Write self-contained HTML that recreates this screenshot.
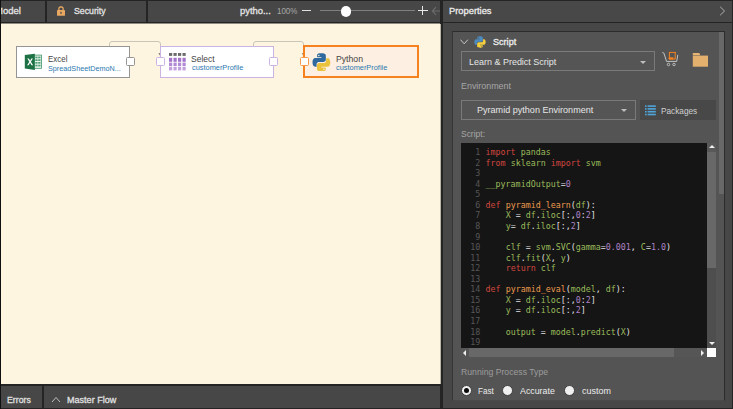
<!DOCTYPE html>
<html><head><meta charset="utf-8"><title>Properties</title>
<style>
*{box-sizing:border-box;margin:0;padding:0}
html,body{width:733px;height:409px;overflow:hidden;background:#242424;font-family:"Liberation Sans",sans-serif;}
.abs,.abs *{position:absolute}
#root{position:relative;width:733px;height:409px;overflow:hidden;background:#242424}
.bar{background:#474747}
.t{white-space:nowrap;line-height:1;transform-origin:0 50%;transform:scaleX(var(--s,1))}
.sb{-webkit-text-stroke:0.3px currentColor}
.cream{background:#fdf5e0}
.node{background:#fff;border:1px solid #959595}
.port{width:9px;height:9px;background:#fff;border:1px solid #959595;border-radius:1.5px}
.nt{font-size:9.6px;color:#444}
.ns{font-size:7.6px;color:#2a7ab0}
.code{font-family:"DejaVu Sans Mono","Liberation Mono",monospace;font-size:8.32px;line-height:10.57px;white-space:pre;color:#e6e6e6}
.k{color:#d2463f}.g{color:#9bbb5b}.f{color:#ec9a4e}.n{color:#ad83c6}.w{color:#e2e2e2}
.ln{color:#575757;text-align:right}
.abs .code span{position:static}
</style></head><body>
<div id="root" class="abs">

<!-- top toolbar (left) -->
<div class="bar" style="left:1px;top:1px;width:439px;height:21px"></div>
<div style="left:45px;top:1px;width:2px;height:21px;background:#242424"></div>
<div style="left:146px;top:1px;width:2px;height:21px;background:#242424"></div>
<div class="t sb" style="left:-5.2px;top:7.4px;font-size:9.3px;color:#e4e4e4;--s:1.020">Model</div>
<svg style="left:56px;top:6px" width="10" height="10" viewBox="0 0 10 10"><path d="M2.900 4.200V2.500a1.500 1.500 0 0 1 1.500-1.500h1.200a1.500 1.500 0 0 1 1.500 1.500V4.200" fill="none" stroke="#e8a862" stroke-width="1.300"/><rect x="1" y="4" width="8" height="5.8" rx="0.6" fill="#e8a862"/><rect x="4.4" y="5.8" width="1.2" height="2" fill="#444"/></svg>
<div class="t sb" style="left:74.4px;top:7.4px;font-size:9.3px;color:#e4e4e4;--s:0.941">Security</div>
<div class="t sb" style="left:240.2px;top:7.4px;font-size:9.3px;color:#e4e4e4;--s:1.010">pytho...</div>
<div class="t" style="left:276.7px;top:7.4px;font-size:9.3px;color:#a8a8a8;--s:0.858">100%</div>
<div style="left:302px;top:10px;width:9px;height:1.4px;background:#e0e0e0"></div>
<div style="left:320px;top:10.4px;width:95px;height:1px;background:#808080"></div>
<div style="left:340.5px;top:6px;width:10.5px;height:10.5px;border-radius:50%;background:#fff"></div>
<div style="left:418px;top:10.100px;width:9.600px;height:1.300px;background:#e8e8e8"></div>
<div style="left:422.200px;top:5.900px;width:1.300px;height:9.600px;background:#e8e8e8"></div>
<svg style="left:431px;top:6px" width="10" height="10" viewBox="0 0 10 10"><path d="M9 5H1.5M5 1.2L1.3 5L5 8.8" fill="none" stroke="#6c6c6c" stroke-width="1.1"/></svg>

<!-- canvas -->
<div class="cream" style="left:1px;top:24px;width:439px;height:360px"></div>

<div style="left:440px;top:24px;width:1px;height:360px;background:#bdb7a9"></div>
<div style="left:1px;top:23px;width:439px;height:1px;background:#8f8b81"></div>
<div style="left:0;top:0;width:1px;height:409px;background:#101010"></div>
<!-- connectors -->
<svg style="left:0;top:24px" width="440" height="360" viewBox="0 24 440 360">
<path d="M109.5 46V44a2.5 2.5 0 0 1 2.500-2.500H158a2.500 2.500 0 0 1 2.500 2.500V57" fill="none" stroke="#c9c5b8" stroke-width="1"/>
<path d="M253.500 46V44a2.500 2.500 0 0 1 2.500-2.500H301a2.500 2.500 0 0 1 2.500 2.500V57" fill="none" stroke="#c9c5b8" stroke-width="1"/>
<path d="M158.500 53.200H160L159.600 55.600Z" fill="#5a5a5a"/><path d="M302 53.200H303.500L303.100 55.600Z" fill="#5a5a5a"/>
</svg>

<!-- Excel node -->
<div class="node" style="left:16px;top:46px;width:114px;height:32px"></div>
<svg style="left:24px;top:53px" width="19" height="18" viewBox="0 0 19 18">
<rect x="10" y="2.100" width="7.400" height="13.200" fill="#eaf4ee" stroke="#3c9464" stroke-width="0.800"/>
<g fill="#4f9f74"><rect x="11.300" y="3.600" width="2.300" height="1.700"/><rect x="14.200" y="3.600" width="2.300" height="1.700"/><rect x="11.300" y="6.300" width="2.300" height="1.700"/><rect x="14.200" y="6.300" width="2.300" height="1.700"/><rect x="11.300" y="9" width="2.300" height="1.700"/><rect x="14.200" y="9" width="2.300" height="1.700"/><rect x="11.300" y="11.700" width="2.300" height="1.700"/><rect x="14.200" y="11.700" width="2.300" height="1.700"/></g>
<path d="M0.800 2L10.800 0.800V16.900L0.800 15.400Z" fill="#1e7145"/>
<path d="M3.300 5.600L5.300 8.800L3.100 12.200H4.700L6.100 9.800L7.500 12.200H9.100L6.900 8.800L8.900 5.600H7.300L6.100 7.800L4.900 5.600Z" fill="#fff"/>
</svg>
<div class="t" style="left:47.6px;top:55.0px;font-size:9.3px;color:#444;--s:0.853">Excel</div>
<div class="t" style="left:47.6px;top:64.6px;font-size:7.4px;color:#2a78b0;--s:0.979">SpreadSheetDemoN...</div>
<div class="port" style="left:126px;top:57px"></div>

<!-- Select node -->
<div class="node" style="left:160px;top:46px;width:114px;height:32px;border-color:#cdb2e4"></div>
<svg style="left:169px;top:53.400px" width="18" height="18" viewBox="0 0 18 18"><rect x="0" y="0" width="3.200" height="2.9" fill="#6b6b6b"/><rect x="4.5" y="0" width="3.200" height="2.9" fill="#6b6b6b"/><rect x="9" y="0" width="3.200" height="2.9" fill="#6b6b6b"/><rect x="13.5" y="0" width="3.200" height="2.9" fill="#6b6b6b"/><rect x="0" y="4.8" width="3.200" height="4.0" fill="#a173c9"/><rect x="4.5" y="4.8" width="3.200" height="4.0" fill="#a173c9"/><rect x="9" y="4.8" width="3.200" height="4.0" fill="#a173c9"/><rect x="13.5" y="4.8" width="3.200" height="4.0" fill="#a173c9"/><rect x="0" y="9.6" width="3.200" height="3.6" fill="#b289d5"/><rect x="4.5" y="9.6" width="3.200" height="3.6" fill="#b289d5"/><rect x="9" y="9.6" width="3.200" height="3.6" fill="#b289d5"/><rect x="13.5" y="9.6" width="3.200" height="3.6" fill="#b289d5"/><rect x="0" y="14" width="3.200" height="3.4" fill="#c2a0de"/><rect x="4.5" y="14" width="3.200" height="3.4" fill="#c2a0de"/><rect x="9" y="14" width="3.200" height="3.4" fill="#c2a0de"/><rect x="13.5" y="14" width="3.200" height="3.4" fill="#c2a0de"/></svg>
<div class="t" style="left:191.1px;top:55.0px;font-size:9.3px;color:#444;--s:0.913">Select</div>
<div class="t" style="left:191.7px;top:64.4px;font-size:7.4px;color:#2a78b0;--s:0.999">customerProfile</div>
<div class="port" style="left:155.800px;top:57px;border-color:#cdb2e4"></div>
<div class="port" style="left:269.300px;top:57px;border-color:#cdb2e4"></div>

<!-- Python node -->
<div style="left:302.500px;top:45px;width:116.500px;height:33px;background:#fdf0e2;border:2px solid #f5821f"></div>
<svg style="left:312px;top:52.500px" width="18.800" height="18.800" viewBox="0 0 110 110">
<path d="M54 2C28 2 30 13 30 13v12h25v4H20S3 27 3 54s15 26 15 26h9V67s-1-15 15-15h25s14 0 14-14V15S83 2 54 2zM40 10a4.500 4.500 0 1 1 0 9 4.500 4.500 0 0 1 0-9z" fill="#30699d"/>
<path d="M56 108c26 0 24-11 24-11V85H55v-4h35s17 2 17-25-15-26-15-26h-9v13s1 15-15 15H43s-14 0-14 14v23s-2 13 27 13zm14-8a4.500 4.500 0 1 1 0-9 4.500 4.500 0 0 1 0 9z" fill="#eac23c"/>
</svg>
<div class="t" style="left:335.8px;top:55.0px;font-size:9.3px;color:#444;--s:0.933">Python</div>
<div class="t" style="left:336.1px;top:64.4px;font-size:7.4px;color:#2a78b0;--s:0.999">customerProfile</div>
<div class="port" style="left:299.500px;top:57px;border-color:#f6994a"></div>

<!-- bottom bar -->
<div class="bar" style="left:1px;top:386px;width:439px;height:22px"></div>
<div style="left:42px;top:386px;width:2px;height:22px;background:#242424"></div>
<div class="t sb" style="left:6.7px;top:396.0px;font-size:9.3px;color:#e0e0e0;--s:0.940">Errors</div>
<svg style="left:51px;top:396px" width="10" height="7" viewBox="0 0 10 7"><path d="M1 6L5 1.500L9 6" fill="none" stroke="#bdbdbd" stroke-width="1"/></svg>
<div class="t sb" style="left:66.9px;top:396.0px;font-size:9.3px;color:#e0e0e0;--s:0.974">Master Flow</div>

<!-- right panel -->
<div style="left:443px;top:1px;width:289px;height:21px;background:#484848"></div>
<div class="bar" style="left:443px;top:23px;width:289px;height:385px"></div>
<div class="t sb" style="left:449.3px;top:7.3px;font-size:9.3px;color:#ececec;--s:1.003">Properties</div>
<svg style="left:719px;top:6px" width="7" height="10" viewBox="0 0 7 10"><path d="M1.200 0.800L5.500 5L1.200 9.200" fill="none" stroke="#b0b0b0" stroke-width="1"/></svg>

<div style="left:452px;top:31px;width:273px;height:370px;background:#545454;border:1px solid #2c2c2c;border-left-color:#363636;border-bottom-color:#4a4a4a"></div>
<!-- outer scrollbar thumb -->
<div style="left:718.500px;top:32px;width:5.500px;height:162px;background:#686868"></div>

<svg style="left:459.500px;top:39px" width="9" height="6" viewBox="0 0 9 6"><path d="M0.500 0.700L4.200 4.800L7.900 0.700" fill="none" stroke="#c8c8c8" stroke-width="1"/></svg>
<svg style="left:474px;top:35.800px" width="12" height="12" viewBox="0 0 110 110">
<path d="M54 2C28 2 30 13 30 13v12h25v4H20S3 27 3 54s15 26 15 26h9V67s-1-15 15-15h25s14 0 14-14V15S83 2 54 2zM40 10a4.500 4.500 0 1 1 0 9 4.500 4.500 0 0 1 0-9z" fill="#4b8bbe"/>
<path d="M56 108c26 0 24-11 24-11V85H55v-4h35s17 2 17-25-15-26-15-26h-9v13s1 15-15 15H43s-14 0-14 14v23s-2 13 27 13zm14-8a4.500 4.500 0 1 1 0-9 4.500 4.500 0 0 1 0 9z" fill="#f6cf3f"/>
</svg>
<div class="t sb" style="left:492.5px;top:38.0px;font-size:9.3px;color:#ececec;--s:0.976">Script</div>

<!-- dropdown 1 -->
<div style="left:461px;top:51px;width:194px;height:20px;border:1px solid #7a7a7a;background:#555"></div>
<div class="t" style="left:469.3px;top:58.1px;font-size:9.3px;color:#e6e6e6;--s:0.965">Learn &amp; Predict Script</div>
<div style="left:640px;top:60.500px;width:0;height:0;border-left:3.400px solid transparent;border-right:3.400px solid transparent;border-top:3.500px solid #bdbdbd"></div>
<!-- cart icon -->
<svg style="left:662px;top:51px" width="18" height="17" viewBox="0 0 18 17">
<path d="M0.400 1.500L1.900 2.100L4.500 10.400H14.700L15.800 3.800" fill="none" stroke="#cfcfcf" stroke-width="0.900" stroke-linejoin="round"/>
<rect x="7.400" y="1.400" width="5.800" height="6.600" fill="none" stroke="#f5821f" stroke-width="1"/>
<path d="M6.200 7.300L7.200 6.200H11.400V8.500H7.200Z" fill="#f5821f"/>
<path d="M12.200 0.900H13.700V2.600Z" fill="#f5821f"/>
<circle cx="6.500" cy="13.500" r="1.250" fill="none" stroke="#cfcfcf" stroke-width="0.800"/><circle cx="12" cy="13.500" r="1.250" fill="none" stroke="#cfcfcf" stroke-width="0.800"/>
</svg>
<!-- folder icon -->
<svg style="left:692px;top:52px" width="17" height="16" viewBox="0 0 17 16">
<path d="M0.800 0.900H7.300L8.300 3.300H0.800Z" fill="#e6b574"/><rect x="0.800" y="3.600" width="15.200" height="11.100" fill="#e3b06e"/>
</svg>

<div class="t" style="left:461.1px;top:82.2px;font-size:9.3px;color:#a6a6a6;--s:0.958">Environment</div>

<!-- dropdown 2 -->
<div style="left:461px;top:100px;width:175px;height:20px;border:1px solid #7a7a7a;background:#555"></div>
<div class="t" style="left:476.9px;top:106.2px;font-size:9.3px;color:#e6e6e6;--s:0.974">Pyramid python Environment</div>
<div style="left:620.500px;top:109px;width:0;height:0;border-left:3.500px solid transparent;border-right:3.500px solid transparent;border-top:3.500px solid #bdbdbd"></div>
<!-- packages -->
<div style="left:640px;top:100px;width:75.500px;height:20px;background:#484848"></div>
<svg style="left:645px;top:104.500px" width="11" height="11" viewBox="0 0 11 11"><g fill="#4ea6dc"><rect x="0" y="0.300" width="1.600" height="1.600"/><rect x="0" y="3.100" width="1.600" height="1.600"/><rect x="0" y="5.900" width="1.600" height="1.600"/><rect x="0" y="8.700" width="1.600" height="1.600"/><rect x="2.600" y="0.300" width="8.200" height="1.600"/><rect x="2.600" y="3.100" width="8.200" height="1.600"/><rect x="2.600" y="5.900" width="8.200" height="1.600"/><rect x="2.600" y="8.700" width="8.200" height="1.600"/></g></svg>
<div class="t" style="left:660.6px;top:106.8px;font-size:9.3px;color:#d0d0d0;--s:0.886">Packages</div>

<div class="t" style="left:461.0px;top:130.0px;font-size:9.3px;color:#a6a6a6;--s:0.910">Script:</div>

<!-- editor -->
<div style="left:461px;top:143px;width:246px;height:205px;background:#151515;overflow:hidden">
<div class="code ln" style="left:0;top:4px;width:19.3px">1
2
3
4
5
6
7
8
9
10
11
12
13
14
15
16
17
18
19</div>
<div class="code" style="left:24.6px;top:4px"><span class="k">import</span> <span class="g">pandas</span>
<span class="k">from</span> <span class="g">sklearn</span> <span class="k">import</span> <span class="g">svm</span>

<span class="g">__pyramidOutput</span><span class="w">=</span><span class="n">0</span>

<span class="k">def</span> <span class="f">pyramid_learn</span><span class="w">(</span><span class="g">df</span><span class="w">):</span>
    <span class="g">X</span> <span class="w">=</span> <span class="g">df</span><span class="w">.</span><span class="g">iloc</span><span class="w">[:,</span><span class="n">0</span><span class="w">:</span><span class="n">2</span><span class="w">]</span>
    <span class="g">y</span><span class="w">=</span> <span class="g">df</span><span class="w">.</span><span class="g">iloc</span><span class="w">[:,</span><span class="n">2</span><span class="w">]</span>

    <span class="g">clf</span> <span class="w">=</span> <span class="g">svm</span><span class="w">.</span><span class="g">SVC</span><span class="w">(</span><span class="g">gamma</span><span class="w">=</span><span class="n">0.001</span><span class="w">,</span> <span class="g">C</span><span class="w">=</span><span class="n">1.0</span><span class="w">)</span>
    <span class="g">clf</span><span class="w">.</span><span class="g">fit</span><span class="w">(</span><span class="g">X</span><span class="w">,</span> <span class="g">y</span><span class="w">)</span>
    <span class="k">return</span> <span class="g">clf</span>

<span class="k">def</span> <span class="f">pyramid_eval</span><span class="w">(</span><span class="g">model</span><span class="w">,</span> <span class="g">df</span><span class="w">):</span>
    <span class="g">X</span> <span class="w">=</span> <span class="g">df</span><span class="w">.</span><span class="g">iloc</span><span class="w">[:,</span><span class="n">0</span><span class="w">:</span><span class="n">2</span><span class="w">]</span>
    <span class="g">y</span> <span class="w">=</span> <span class="g">df</span><span class="w">.</span><span class="g">iloc</span><span class="w">[:,</span><span class="n">2</span><span class="w">]</span>

    <span class="g">output</span> <span class="w">=</span> <span class="g">model</span><span class="w">.</span><span class="g">predict</span><span class="w">(</span><span class="g">X</span><span class="w">)</span>
</div>
</div>
<!-- v scrollbar -->
<div style="left:707px;top:143px;width:9px;height:205px;background:#4e4e4e"></div>
<div style="left:707px;top:143px;width:9px;height:8.500px;background:#585858"></div>
<div style="left:708.500px;top:145px;width:0;height:0;border-left:3px solid transparent;border-right:3px solid transparent;border-bottom:3.500px solid #f0f0f0"></div>
<div style="left:707px;top:151.500px;width:9px;height:116.500px;background:#686868"></div>
<div style="left:708.500px;top:342px;width:0;height:0;border-left:3px solid transparent;border-right:3px solid transparent;border-top:3.500px solid #f0f0f0"></div>
<!-- h scrollbar -->
<div style="left:461px;top:348px;width:246px;height:9px;background:#565656"></div>
<div style="left:469px;top:348px;width:205px;height:9px;background:#686868"></div>
<div style="left:462.500px;top:349.500px;width:0;height:0;border-top:3px solid transparent;border-bottom:3px solid transparent;border-right:3.500px solid #f0f0f0"></div>
<div style="left:701px;top:349.500px;width:0;height:0;border-top:3px solid transparent;border-bottom:3px solid transparent;border-left:3.500px solid #f0f0f0"></div>
<div style="left:707px;top:348px;width:9px;height:9px;background:#fff"></div>

<div class="t" style="left:460.8px;top:368.1px;font-size:9.3px;color:#9c9c9c;--s:0.932">Running Process Type</div>
<div style="left:460.800px;top:385.300px;width:11px;height:11px;border-radius:50%;background:#f0f0f0;border:1px solid #3e3e3e"></div>
<div style="left:463.600px;top:388.100px;width:5.400px;height:5.400px;border-radius:50%;background:#0a0a0a"></div>
<div class="t" style="left:478.2px;top:387.1px;font-size:9.3px;color:#ececec;--s:0.873">Fast</div>
<div style="left:502.400px;top:385.300px;width:11px;height:11px;border-radius:50%;background:#f0f0f0;border:1px solid #3e3e3e"></div>
<div class="t" style="left:520.4px;top:387.1px;font-size:9.3px;color:#ececec;--s:0.948">Accurate</div>
<div style="left:564px;top:385.300px;width:11px;height:11px;border-radius:50%;background:#f0f0f0;border:1px solid #3e3e3e"></div>
<div class="t" style="left:581.9px;top:387.1px;font-size:9.3px;color:#ececec;--s:0.964">custom</div>

</div>
</body></html>
